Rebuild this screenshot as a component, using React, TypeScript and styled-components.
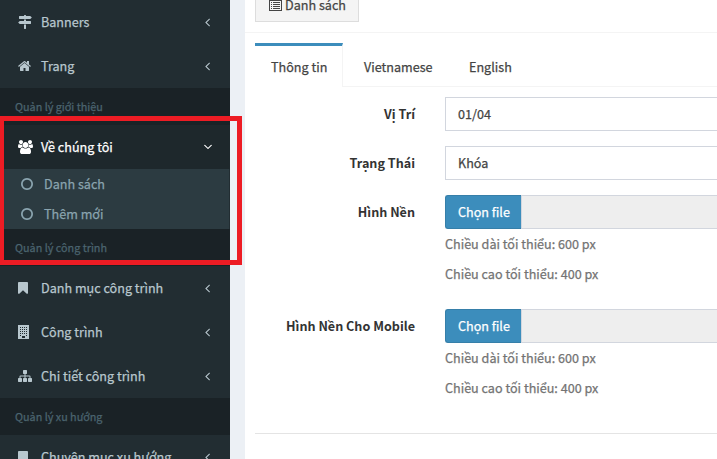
import React from "react";
import styled, { createGlobalStyle } from "styled-components";

const GlobalStyle = createGlobalStyle`
  *, *::before, *::after { box-sizing: border-box; }
  html, body { margin: 0; padding: 0; overflow: hidden; }
  body {
    font-family: "Source Sans Pro", "Noto Sans CJK SC", "Noto Sans", sans-serif;
    font-size: 12.6px;
    font-weight: 400;
    line-height: 20px;
    -webkit-text-stroke: 0.25px;
    color: #333;
    background: #ecf0f5;
  }
`;

const Page = styled.div`
  position: relative;
  display: flex;
  gap: 15px;
  width: 717px;
  height: 459px;
  overflow: hidden;
  background: #ecf0f5;
`;

const Sidebar = styled.nav`
  flex: 0 0 230px;
  height: 459px;
  overflow: hidden;
  background: #222d32;
`;

const MenuItem = styled.a<{ $active?: boolean }>`
  display: flex;
  align-items: center;
  height: 44px;
  padding: 0 18px;
  color: ${(p) => (p.$active ? "#fff" : "#b8c7ce")};
  background: ${(p) => (p.$active ? "#1e282c" : "transparent")};
`;

const IconSlot = styled.span`
  display: flex;
  flex: 0 0 23px;
`;

const Label = styled.span`
  flex: 1;
  white-space: nowrap;
`;

const Arrow = styled.span<{ $open?: boolean }>`
  display: flex;
  width: 9px;
  justify-content: center;
  transform: ${(p) => (p.$open ? "rotate(-90deg)" : "none")};
`;

const SectionTitle = styled.div`
  height: 37.14px;
  padding: 10px 15px;
  font-size: 10.8px;
  line-height: 17px;
  color: #4b646f;
  background: #1a2226;
  white-space: nowrap;
`;

const SubMenu = styled.div`
  margin: 0 1px 0 0;
  background: #2c3b41;
`;

const SubItem = styled.a`
  display: flex;
  align-items: center;
  height: 30px;
  padding-left: 21px;
  color: #8aa4af;
`;

const Content = styled.main`
  flex: 1;
  display: flex;
  flex-direction: column;
  background: #fff;
`;

const BoxHeader = styled.header`
  display: flex;
  align-items: flex-end;
  height: 33px;
  padding: 0 10px 10px;
  border-bottom: 1px solid #f4f4f4;
`;

const ListButton = styled.button`
  display: flex;
  flex: none;
  align-items: center;
  gap: 3px;
  width: 104px;
  height: 34px;
  padding: 0 0 0 13px;
  border: 1px solid #ddd;
  font: inherit;
  color: #444;
  background: #f4f4f4;
  white-space: nowrap;

  svg {
    flex: none;
  }
`;

const TabBar = styled.div`
  display: flex;
  gap: 5px;
  height: 44px;
  margin: 10px 0 0 10px;
  border-bottom: 1px solid #f4f4f4;
`;

const Tab = styled.a<{ $active?: boolean; $width: number }>`
  width: ${(p) => p.$width}px;
  height: 44px;
  padding: 11px 0 0 16px;
  border-top: 3px solid ${(p) => (p.$active ? "#3c8dbc" : "transparent")};
  border-right: 1px solid ${(p) => (p.$active ? "#f4f4f4" : "transparent")};
  color: #444;
  background: ${(p) => (p.$active ? "#fff" : "transparent")};
  white-space: nowrap;
`;

const Form = styled.form`
  display: flex;
  flex-direction: column;
  gap: 15px;
  margin: 10px 0 0 10px;
  padding-bottom: 25px;
  border-bottom: 1px solid #e4e4e4;
`;

const Row = styled.div`
  display: grid;
  grid-template-columns: 160px 1fr;
  column-gap: 30px;
`;

const FieldLabel = styled.label`
  padding-top: 7px;
  font-weight: 700;
  -webkit-text-stroke: 0;
  text-align: right;
  white-space: nowrap;
`;

const Field = styled.div`
  height: 34px;
  padding: 6px 12px;
  border: 1px solid #d2d6de;
  border-right: 0;
  color: #444;
`;

const FileField = styled.div`
  display: flex;
  height: 34px;
`;

const FileButton = styled.button`
  width: 76px;
  padding: 0 0 0 12px;
  border: 1px solid #367fa9;
  border-radius: 3px 0 0 3px;
  border-right: 0;
  font: inherit;
  text-align: left;
  color: #fff;
  background: #3c8dbc;
  white-space: nowrap;
`;

const FileName = styled.div`
  flex: 1;
  border: 1px solid #d2d6de;
  border-right: 0;
  background: #eee;
`;

const Help = styled.p`
  height: 20px;
  margin: 5px 0 10px;
  color: #737373;
  white-space: nowrap;
`;

const Highlight = styled.div`
  position: absolute;
  top: 116px;
  left: 0;
  width: 242px;
  height: 149px;
  border: 5px solid #ed1c24;
  border-left-width: 4px;
  pointer-events: none;
`;

type Glyph = { w: number; d: string };

const glyphs: Record<string, Glyph> = {
  signs: {
    w: 1792,
    d: "M1745 1239q10 -10 10 -23t-10 -23l-141 -141q-28 -28 -68 -28h-1344q-26 0 -45 19t-19 45v256q0 26 19 45t45 19h576v64q0 26 19 45t45 19h128q26 0 45 -19t19 -45v-64h512q40 0 68 -28zM768 320h256v-512q0 -26 -19 -45t-45 -19h-128q-26 0 -45 19t-19 45v512zM1600 768q26 0 45 -19t19 -45v-256q0 -26 -19 -45t-45 -19h-1344q-40 0 -68 28l-141 141q-10 10 -10 23t10 23l141 141q28 28 68 28h512v192h256v-192h576z",
  },
  home: {
    w: 1664,
    d: "M1408 544v-480q0 -26 -19 -45t-45 -19h-384v384h-256v-384h-384q-26 0 -45 19t-19 45v480q0 1 .5 3t.5 3l575 474l575 -474q1 -2 1 -6zM1631 613l-62 -74q-8 -9 -21 -11h-3q-13 0 -21 7l-692 577l-692 -577q-12 -8 -24 -7q-13 2 -21 11l-62 74q-8 10 -7 23.5t11 21.5l719 599q32 26 76 26t76 -26l244 -204v195q0 14 9 23t23 9h192q14 0 23 -9t9 -23v-408l219 -182q10 -8 11 -21.5t-7 -23.5z",
  },
  users: {
    w: 1920,
    d: "M593 640q-162 -5 -265 -128h-134q-82 0 -138 40.5t-56 118.5q0 353 124 353q6 0 43.5 -21t97.5 -42.5t119 -21.5q67 0 133 23q-5 -37 -5 -66q0 -139 81 -256zM1664 3q0 -120 -73 -189.5t-194 -69.5h-874q-121 0 -194 69.5t-73 189.5q0 53 3.5 103.5t14 109t26.5 108.5t43 97.5t62 81t85.5 53.5t111.5 20q10 0 43 -21.5t73 -48t107 -48t135 -21.5t135 21.5t107 48t73 48t43 21.5q61 0 111.5 -20t85.5 -53.5t62 -81t43 -97.5t26.5 -108.5t14 -109t3.5 -103.5zM640 1280q0 -106 -75 -181t-181 -75t-181 75t-75 181t75 181t181 75t181 -75t75 -181zM1344 896q0 -159 -112.5 -271.5t-271.5 -112.5t-271.5 112.5t-112.5 271.5t112.5 271.5t271.5 112.5t271.5 -112.5t112.5 -271.5zM1920 671q0 -78 -56 -118.5t-138 -40.5h-134q-103 123 -265 128q81 117 81 256q0 29 -5 66q66 -23 133 -23q59 0 119 21.5t97.5 42.5t43.5 21q124 0 124 -353zM1792 1280q0 -106 -75 -181t-181 -75t-181 75t-75 181t75 181t181 75t181 -75t75 -181z",
  },
  bookmark: {
    w: 1280,
    d: "M1164 1408q23 0 44 -9q33 -13 52.5 -41t19.5 -62v-1289q0 -34 -19.5 -62t-52.5 -41q-19 -8 -44 -8q-48 0 -83 32l-441 424l-441 -424q-36 -33 -83 -33q-23 0 -44 9q-33 13 -52.5 41t-19.5 62v1289q0 34 19.5 62t52.5 41q21 9 44 9h1048z",
  },
  sitemap: {
    w: 1792,
    d: "M1792 288v-320q0 -40 -28 -68t-68 -28h-320q-40 0 -68 28t-28 68v320q0 40 28 68t68 28h96v192h-512v-192h96q40 0 68 -28t28 -68v-320q0 -40 -28 -68t-68 -28h-320q-40 0 -68 28t-28 68v320q0 40 28 68t68 28h96v192h-512v-192h96q40 0 68 -28t28 -68v-320q0 -40 -28 -68t-68 -28h-320q-40 0 -68 28t-28 68v320q0 40 28 68t68 28h96v192q0 52 38 90t90 38h512v192h-96q-40 0 -68 28t-28 68v320q0 40 28 68t68 28h320q40 0 68 -28t28 -68v-320q0 -40 -28 -68t-68 -28h-96v-192h512q52 0 90 -38t38 -90v-192h96q40 0 68 -28t28 -68z",
  },
  circle: {
    w: 1536,
    d: "M768 1184q-148 0 -273 -73t-198 -198t-73 -273t73 -273t198 -198t273 -73t273 73t198 198t73 273t-73 273t-198 198t-273 73zM1536 640q0 -209 -103 -385.5t-279.5 -279.5t-385.5 -103t-385.5 103t-279.5 279.5t-103 385.5t103 385.5t279.5 279.5t385.5 103t385.5 -103t279.5 -279.5t103 -385.5z",
  },
  angle: {
    w: 640,
    d: "M627 992q0 -13 -10 -23l-393 -393l393 -393q10 -10 10 -23t-10 -23l-50 -50q-10 -10 -23 -10t-23 10l-466 466q-10 10 -10 23t10 23l466 466q10 10 23 10t23 -10l50 -50q10 -10 10 -23z",
  },
};

function Icon({ name }: { name: string }) {
  if (name === "building") {
    const cells = [2, 4, 6, 8].flatMap((y) => [2, 4, 6, 8].map((x) => `M${x} ${y}h1v1h-1z`));
    return (
      <svg width="11" height="14" viewBox="0 0 11 14" fill="currentColor" fillRule="evenodd">
        <path d={`M0 0h11v14h-11z${cells.join("")}M2 10h1v1h-1zM8 10h1v1h-1zM4 11h3v2h-3z`} />
      </svg>
    );
  }
  const g = glyphs[name];
  return (
    <svg width={g.w / 128} height="14" viewBox={`0 0 ${g.w} 1792`} fill="currentColor">
      <path transform="translate(0 1536) scale(1 -1)" d={g.d} />
    </svg>
  );
}

function ListIcon() {
  return (
    <svg width="13" height="12" viewBox="0 0 13 12" fill="currentColor" fillRule="evenodd">
      <path d="M0 0h13v12H0zM1 2v9h11V2z" />
      <path d="M2 3h1v1H2zM4 3h7v1H4zM2 5h1v1H2zM4 5h7v1H4zM2 7h1v1H2zM4 7h7v1H4zM2 9h1v1H2zM4 9h7v1H4z" />
    </svg>
  );
}

function Item({ icon, label, open }: { icon: string; label: string; open?: boolean }) {
  return (
    <MenuItem $active={open}>
      <IconSlot><Icon name={icon} /></IconSlot>
      <Label>{label}</Label>
      <Arrow $open={open}><Icon name="angle" /></Arrow>
    </MenuItem>
  );
}

function FileRow({ label }: { label: string }) {
  return (
    <Row>
      <FieldLabel>{label}</FieldLabel>
      <div>
        <FileField>
          <FileButton type="button">Chọn file</FileButton>
          <FileName />
        </FileField>
        <Help>Chiều dài tối thiểu: 600 px</Help>
        <Help>Chiều cao tối thiểu: 400 px</Help>
      </div>
    </Row>
  );
}

export default function App() {
  return (
    <>
      <GlobalStyle />
      <Page>
        <Sidebar>
          <Item icon="signs" label="Banners" />
          <Item icon="home" label="Trang" />
          <SectionTitle>Quản lý giới thiệu</SectionTitle>
          <Item icon="users" label="Về chúng tôi" open />
          <SubMenu>
            <SubItem><IconSlot><Icon name="circle" /></IconSlot>Danh sách</SubItem>
            <SubItem><IconSlot><Icon name="circle" /></IconSlot>Thêm mới</SubItem>
          </SubMenu>
          <SectionTitle>Quản lý công trình</SectionTitle>
          <Item icon="bookmark" label="Danh mục công trình" />
          <Item icon="building" label="Công trình" />
          <Item icon="sitemap" label="Chi tiết công trình" />
          <SectionTitle>Quản lý xu hướng</SectionTitle>
          <Item icon="bookmark" label="Chuyên mục xu hướng" />
        </Sidebar>
        <Content>
          <BoxHeader>
            <ListButton type="button"><ListIcon />Danh sách</ListButton>
          </BoxHeader>
          <TabBar>
            <Tab $active $width={88}>Thông tin</Tab>
            <Tab $width={100}>Vietnamese</Tab>
            <Tab $width={75}>English</Tab>
          </TabBar>
          <Form>
            <Row>
              <FieldLabel>Vị Trí</FieldLabel>
              <Field>01/04</Field>
            </Row>
            <Row>
              <FieldLabel>Trạng Thái</FieldLabel>
              <Field>Khóa</Field>
            </Row>
            <FileRow label="Hình Nền" />
            <FileRow label="Hình Nền Cho Mobile" />
          </Form>
        </Content>
        <Highlight />
      </Page>
    </>
  );
}
